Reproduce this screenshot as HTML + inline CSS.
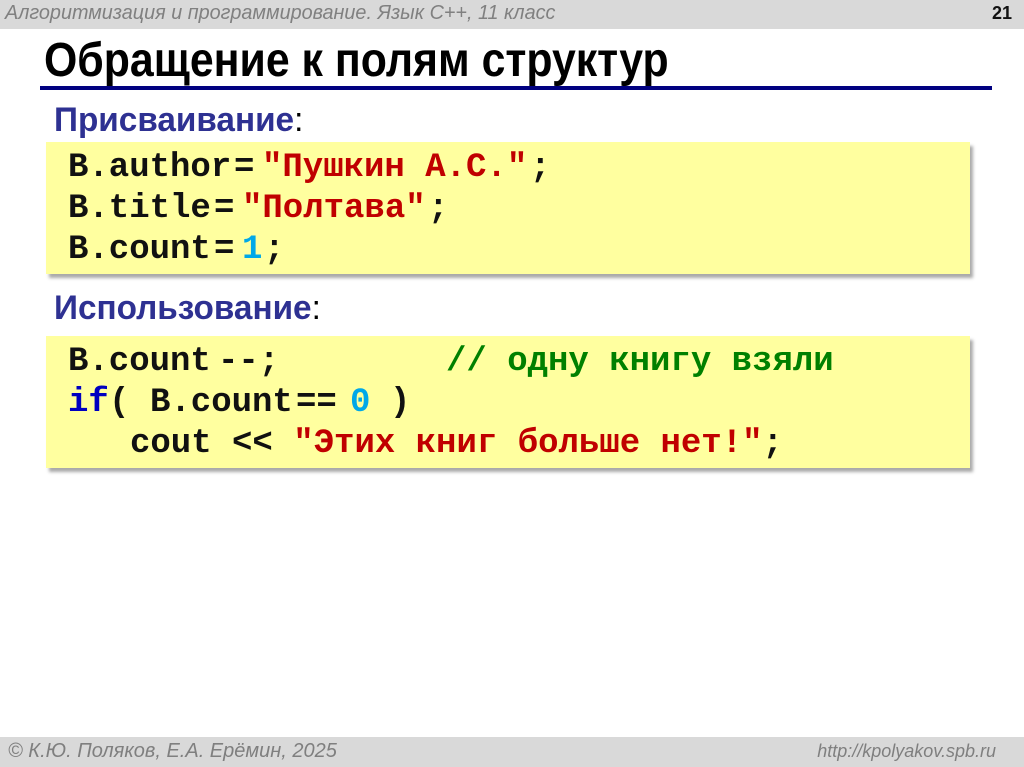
<!DOCTYPE html>
<html><head><meta charset="utf-8"><style>
body{margin:0;width:1024px;height:767px;background:#fff;position:relative;overflow:hidden;font-family:"Liberation Sans",sans-serif}
.hdr{position:absolute;left:0;top:0;width:1024px;height:29px;background:#d9d9d9}
.hdr .t{position:absolute;left:5px;top:2px;font-size:20px;font-style:italic;color:#808080;transform:scaleX(.99);transform-origin:left;white-space:nowrap}
.hdr .n{position:absolute;right:12px;top:3px;font-size:18px;font-weight:bold;color:#111}
.title{position:absolute;left:44px;top:33px;font-size:48px;font-weight:bold;color:#000;white-space:nowrap;transform:scaleX(.892);transform-origin:left}
.line{position:absolute;left:40px;top:86px;width:952px;height:4px;background:#000080}
.sub{position:absolute;left:54px;font-size:34px;color:#2e3192;font-weight:bold;transform:scaleX(.98);transform-origin:left;white-space:nowrap}
.sub span{color:#000;font-weight:normal}
.box{position:absolute;left:46px;width:924px;height:132px;background:#ffff9f;box-shadow:3px 4px 3px #aaa}
.code{position:absolute;font-family:"Liberation Mono","Noto Sans CJK SC",monospace;font-weight:bold;font-size:34px;line-height:34px;color:#111;white-space:pre}
.s{color:#c00000}.c{color:#008000}.k{color:#0000c0}.d{color:#00a8e8}
.ftr{position:absolute;left:0;top:737px;width:1024px;height:30px;background:#d9d9d9}
.ftr div{position:absolute;top:4px;font-size:18px;font-style:italic;color:#7f7f7f;white-space:nowrap}
</style></head><body>
<div class="hdr"><div class="t">Алгоритмизация и программирование. Язык С++, 11 класс</div><div class="n">21</div></div>
<div class="title">Обращение к полям структур</div>
<div class="line"></div>
<div class="sub" style="top:101px">Присваивание<span>:</span></div>
<div class="box" style="top:142px"></div>
<div class="code" style="left:68px;top:151px">B.author</div><div class="code" style="left:234px;top:151px">=</div><div class="code s" style="left:262px;top:151px">"Пушкин А.С."</div><div class="code" style="left:530px;top:151px">;</div>
<div class="code" style="left:68px;top:192px">B.title</div><div class="code" style="left:214px;top:192px">=</div><div class="code s" style="left:242px;top:192px">"Полтава"</div><div class="code" style="left:428px;top:192px">;</div>
<div class="code" style="left:68px;top:233px">B.count</div><div class="code" style="left:214px;top:233px">=</div><div class="code d" style="left:242px;top:233px">1</div><div class="code" style="left:264px;top:233px">;</div>
<div class="sub" style="top:289px">Использование<span>:</span></div>
<div class="box" style="top:336px"></div>
<div class="code" style="left:68px;top:345px">B.count</div><div class="code" style="left:218px;top:345px">--;</div><div class="code c" style="left:446px;top:345px">// одну книгу взяли</div>
<div class="code k" style="left:68px;top:386px">if</div><div class="code" style="left:109px;top:386px">(</div><div class="code" style="left:150px;top:386px">B.count</div><div class="code" style="left:296px;top:386px">==</div><div class="code d" style="left:350px;top:386px">0</div><div class="code" style="left:390px;top:386px">)</div>
<div class="code" style="left:130px;top:427px">cout &lt;&lt; <span class="s">"Этих книг больше нет!"</span>;</div>
<div class="ftr"><div style="left:8px;font-size:20px;top:3px">© К.Ю. Поляков, Е.А. Ерёмин, 2025</div><div style="right:28px">http://kpolyakov.spb.ru</div></div>
</body></html>
